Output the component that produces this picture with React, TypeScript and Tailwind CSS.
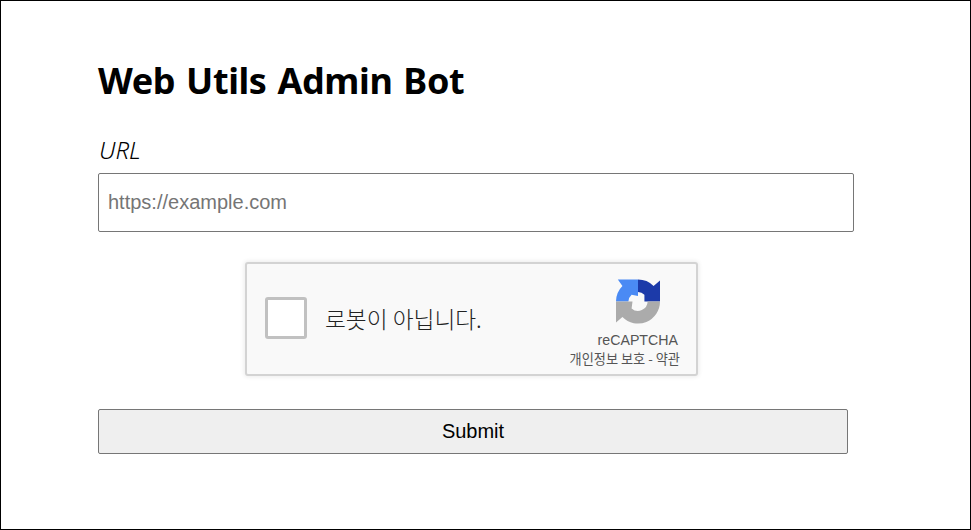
import React from 'react';

const RecaptchaLogo: React.FC = () => (
    <svg width="44" height="47" viewBox="0 0 48 48" className="mr-[20px] block">
        <path d="M24 0A24 24 0 0 1 41 7L48 1V24H31L31 16.5A10.5 10.5 0 0 0 24 13.5Z" fill="#1c3aa9" />
        <path d="M0 24A24 24 0 0 1 7 7L2 0H24V18L17 16.5A10.5 10.5 0 0 0 13.5 24Z" fill="#4a8af4" />
        <path d="M48 24A24 24 0 0 1 7 41L0 47V24H18L17 31.5A10.5 10.5 0 0 0 34.5 24Z" fill="#ababab" />
    </svg>
);

const App: React.FC = () => {
    return (
        <div className="h-[530px] w-[971px] border border-black bg-white pl-[97px] font-['Liberation_Sans',sans-serif] text-black">
            <h1 className="pt-[55px] font-['Noto_Sans','Noto_Sans_CJK_KR',sans-serif] text-[36px] font-bold leading-[50px] tracking-[-0.4px] [word-spacing:2px]">
                Web Utils Admin Bot
            </h1>
            <label className="ml-[1px] mt-[26px] block font-['Noto_Sans','Noto_Sans_CJK_KR',sans-serif] text-[24px] font-light italic leading-[36px]">
                URL
            </label>
            <input
                type="text"
                placeholder="https://example.com"
                className="mt-[5px] block h-[59px] w-[756px] rounded-[2px] border border-[#767676] px-[9px] text-[20px] placeholder:text-[#757575]"
            />
            <div className="mt-[30px] flex w-[747px] justify-center">
                <div className="flex h-[114px] w-[453px] items-center rounded-[3px] border-2 border-[#d3d3d3] bg-[#f9f9f9] shadow-[0_0_4px_1px_rgba(0,0,0,0.08)]">
                    <div className="mb-[2px] ml-[18px] h-[42px] w-[42px] rounded-[3px] border-[3px] border-[#c1c1c1] bg-white" />
                    <span className="ml-[18px] font-['Noto_Sans_CJK_KR',sans-serif] text-[22.7px] font-light text-[#222]">로봇이 아닙니다.</span>
                    <div className="ml-auto mr-[16px] mt-[6px] flex flex-col items-end">
                        <RecaptchaLogo />
                        <span className="mr-[2px] mt-[6px] text-[14.2px] leading-[18px] text-[#555]">reCAPTCHA</span>
                        <span className="mt-[2px] whitespace-nowrap font-['Noto_Sans_CJK_KR',sans-serif] text-[13.2px] leading-[16px] text-[#555]">개인정보 보호 - 약관</span>
                    </div>
                </div>
            </div>
            <button className="mt-[33px] block h-[45px] w-[750px] rounded-[2px] border border-[#767676] bg-[#efefef] pb-[2px] text-[20px]">
                Submit
            </button>
        </div>
    );
};

export default App;
